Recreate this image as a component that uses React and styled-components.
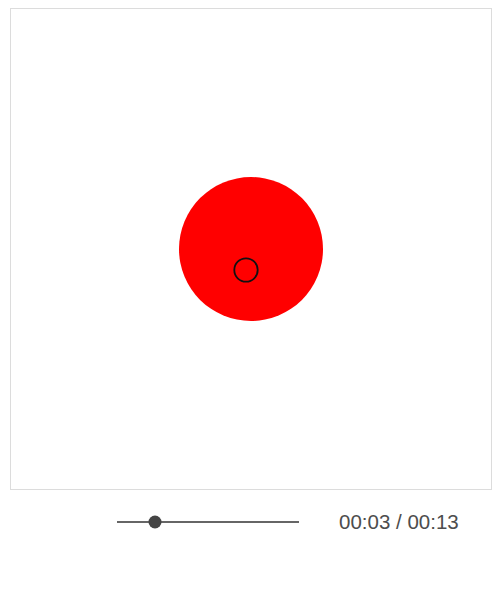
import React from "react";
import styled, { createGlobalStyle } from "styled-components";

const GlobalStyle = createGlobalStyle`
  html, body {
    margin: 0;
    padding: 0;
    background: #fff;
    font-family: "Liberation Sans", Arial, sans-serif;
  }
`;

const Page = styled.div`
  padding: 8px 0 0 10px;
`;

const Stage = styled.div`
  box-sizing: border-box;
  width: 482px;
  height: 482px;
  border: 1px solid #dcdcdc;
  background: #fff;

  svg {
    display: block;
  }
`;

const Controls = styled.div`
  display: flex;
  align-items: center;
  gap: 40px;
  height: 40px;
  padding: 12px 0 0 107px;
`;

const Track = styled.div`
  position: relative;
  width: 182px;
  height: 2px;
  background: #666;
`;

const Thumb = styled.span`
  position: absolute;
  top: 50%;
  width: 13px;
  height: 13px;
  border-radius: 50%;
  background: #444;
  transform: translate(-50%, -50%);
`;

const Time = styled.span`
  font-size: 20.5px;
  color: #4d4d4d;
  line-height: 1;
`;

const fmt = (s) =>
  `${String(Math.floor(s / 60)).padStart(2, "0")}:${String(s % 60).padStart(2, "0")}`;

export default function App() {
  const current = 3;
  const duration = 13;
  const progress = 0.208;

  return (
    <Page>
      <GlobalStyle />
      <Stage>
        <svg width="480" height="480" viewBox="0 0 480 480">
          <circle cx="240" cy="240" r="72" fill="#ff0000" />
          <circle cx="235" cy="261" r="11.7" fill="none" stroke="#111" strokeWidth="1.8" />
        </svg>
      </Stage>
      <Controls>
        <Track>
          <Thumb style={{ left: `${progress * 100}%` }} />
        </Track>
        <Time>
          {fmt(current)} / {fmt(duration)}
        </Time>
      </Controls>
    </Page>
  );
}
